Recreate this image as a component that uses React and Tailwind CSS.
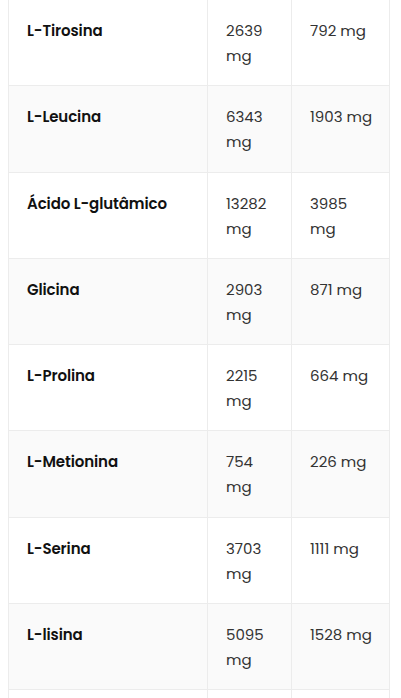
const rows = [
  ["L-Tirosina", "2639 mg", "792 mg"],
  ["L-Leucina", "6343 mg", "1903 mg"],
  ["Ácido L-glutâmico", "13282 mg", "3985 mg"],
  ["Glicina", "2903 mg", "871 mg"],
  ["L-Prolina", "2215 mg", "664 mg"],
  ["L-Metionina", "754 mg", "226 mg"],
  ["L-Serina", "3703 mg", "1111 mg"],
  ["L-lisina", "5095 mg", "1528 mg"],
  ["", "", ""],
];

export default function App() {
  return (
    <div className="h-[698px] overflow-hidden bg-white pl-2 pr-3 font-['Poppins','Inter',sans-serif]">
      <table className="-mt-px w-[381px] table-fixed border-collapse border border-[#ececec]">
        <colgroup>
          <col className="w-[199px]" />
          <col className="w-[84px]" />
          <col className="w-[98px]" />
        </colgroup>
        <tbody>
          {rows.map(([name, a, b], i) => (
            <tr key={i} className={i % 2 ? "bg-[#fafafa]" : "bg-white"}>
              <td className="h-[86.3px] border border-[#ececec] px-[18px] pt-[18px] align-top text-[15px] font-semibold leading-[25px] tracking-[-0.1px] text-[#111]">
                {name}
              </td>
              <td className="border border-[#ececec] pl-[18px] pr-[10px] pt-[18px] align-top text-[15px] leading-[25px] text-[#333]">
                {a}
              </td>
              <td className="border border-[#ececec] pl-[18px] pr-[14px] pt-[18px] align-top text-[15px] leading-[25px] text-[#333]">
                {b}
              </td>
            </tr>
          ))}
        </tbody>
      </table>
    </div>
  );
}
